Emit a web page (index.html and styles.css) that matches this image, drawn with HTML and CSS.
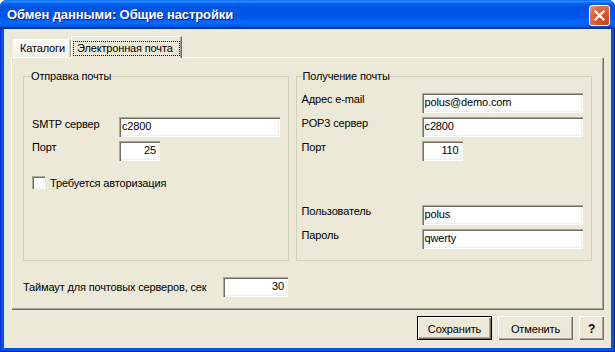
FILE: index.html
```html
<!DOCTYPE html>
<html lang="ru">
<head>
<meta charset="utf-8">
<title>Обмен данными: Общие настройки</title>
<link rel="stylesheet" href="styles.css">
</head>
<body>
<div class="window">
  <div class="titlebar">
    <span class="title">Обмен данными: Общие настройки</span>
    <button class="close" aria-label="Закрыть">
      <svg width="19" height="19" viewBox="0 0 19 19"><path d="M5.5 5.5 L13.5 13.5 M13.5 5.5 L5.5 13.5" stroke="#fff" stroke-width="2.2" stroke-linecap="square" fill="none"/></svg>
    </button>
  </div>
  <div class="client">
    <div class="tabs">
      <div class="tab">Каталоги</div>
      <div class="tab active"><span class="focus">Электронная почта</span></div>
    </div>
    <div class="panel">
      <div class="groups">
        <fieldset class="group send">
          <legend>Отправка почты</legend>
          <div class="row first-send"><span class="label">SMTP сервер</span><div class="field wide">c2800</div></div>
          <div class="row next"><span class="label">Порт</span><div class="field short num">25</div></div>
          <div class="check-row"><span class="checkbox"></span><span>Требуется авторизация</span></div>
        </fieldset>
        <fieldset class="group recv">
          <legend>Получение почты</legend>
          <div class="row first-recv"><span class="label">Адрес e-mail</span><div class="field wide">polus@demo.com</div></div>
          <div class="row next"><span class="label">POP3 сервер</span><div class="field wide">c2800</div></div>
          <div class="row next"><span class="label">Порт</span><div class="field short num">110</div></div>
          <div class="row far"><span class="label">Пользователь</span><div class="field wide">polus</div></div>
          <div class="row next"><span class="label">Пароль</span><div class="field wide">qwerty</div></div>
        </fieldset>
      </div>
      <div class="timeout">
        <span class="label">Таймаут для почтовых серверов, сек</span>
        <div class="field num">30</div>
      </div>
    </div>
    <div class="buttons">
      <button class="btn default">Сохранить</button>
      <button class="btn">Отменить</button>
      <button class="btn help">?</button>
    </div>
  </div>
</div>
</body>
</html>
```
FILE: styles.css
```css
* { box-sizing: border-box; }
html, body { margin: 0; padding: 0; background: #fff; }
body {
  font-family: "Liberation Sans", Arial, sans-serif;
  font-size: 11px;
  letter-spacing: -0.15px;
  color: #000;
}
.window {
  width: 615px;
  height: 352px;
  display: flex;
  flex-direction: column;
  background: #0054E3;
  border-radius: 7px 7px 0 0;
  overflow: hidden;
  box-shadow: inset 1px 0 #0831D9, inset -1px 0 #001EA0, inset 0 -1px #001390;
}
.titlebar {
  height: 29px;
  flex: none;
  display: flex;
  align-items: center;
  justify-content: space-between;
  padding: 0 5px 0 7px;
  background: linear-gradient(to bottom, #0058EE 0%, #3593FF 4%, #288EFF 6%, #127DFF 8%, #036FFC 10%, #0262EE 14%, #0057E5 20%, #0054E3 24%, #0055EB 56%, #005BF5 66%, #026AFE 76%, #0062EF 86%, #0052D6 92%, #0040AB 94%, #003092 100%);
}
.title {
  color: #fff;
  font-weight: bold;
  font-size: 13px;
  letter-spacing: -0.1px;
  text-shadow: 1px 1px #0F1C8A;
}
.close {
  width: 21px;
  height: 21px;
  margin-top: 1px;
  padding: 0;
  border: 1px solid #fff;
  border-radius: 3px;
  background: radial-gradient(circle at 85% 85%, #C8421E 0%, #DA5A36 45%, #E0704E 75%, #F0A48A 100%);
  display: flex;
  align-items: center;
  justify-content: center;
}
.close svg { display: block; }
.client {
  flex: 1;
  margin: 0 4px 4px;
  background: #ECE9D8;
  display: flex;
  flex-direction: column;
  padding: 7px 7px 0;
}
.tabs {
  display: flex;
  align-items: flex-end;
  height: 21px;
  margin-left: 2px;
  flex: none;
}
.tab {
  height: 18px;
  width: 58px;
  padding-left: 6px;
  line-height: 16px;
  background: linear-gradient(to bottom, #FCFCFB, #F1EFE6);
  border: 1px solid #fff;
  border-right-color: #ACA899;
  border-bottom: none;
  box-shadow: inset -1px 0 #D8D5C6;
}
.tab.active {
  height: 22px;
  width: 111px;
  margin-bottom: -1px;
  padding: 3px 0 0 1px;
  position: relative;
  z-index: 1;
  background: #ECE9D8;
  border-right-color: #716F64;
  box-shadow: inset -1px 0 #ACA899;
}
.focus {
  display: inline-block;
  height: 15px;
  width: 107px;
  padding-left: 3px;
  line-height: 13px;
  border: 1px dotted #000;
}
.panel {
  flex: none;
  height: 253px;
  padding: 13px 12px 0;
  box-shadow: inset 1px 1px #fff, inset -1px -1px #716F64, inset -2px -2px #ACA899;
}
.groups {
  display: flex;
  gap: 7px;
  height: 191px;
}
.group {
  margin: 0;
  padding: 0;
  min-width: 0;
  height: 191px;
  border: 1px solid #D0D0BF;
}
.group legend {
  padding: 0;
  line-height: 12px;
}
.send { width: 266px; padding-left: 8px; }
.send legend { margin-left: -1px; }
.recv { width: 297px; padding-left: 5px; }
.recv legend { margin-left: 1px; }
.row {
  display: flex;
  align-items: flex-start;
  height: 20px;
}
.send .label { width: 87px; }
.recv .label { width: 120px; }
.label { line-height: 13px; white-space: nowrap; }
.first-send { margin-top: 35px; }
.first-send .label { padding-top: 1px; }
.first-recv { margin-top: 11px; }
.next { margin-top: 4px; }
.far { margin-top: 44px; }
.field {
  height: 20px;
  padding: 0 3px;
  line-height: 18px;
  background: #fff;
  white-space: nowrap;
  box-shadow: inset 1px 1px #ACA899, inset 2px 2px #716F64, inset -1px -1px #fff, inset -2px -2px #F1EFE2;
}
.wide { width: 161px; }
.short { width: 41px; }
.num { text-align: right; padding-right: 4px; }
.check-row {
  display: flex;
  align-items: center;
  gap: 5px;
  margin-top: 15px;
  height: 13px;
}
.checkbox {
  width: 13px;
  height: 13px;
  background: #fff;
  box-shadow: inset 1px 1px #ACA899, inset 2px 2px #716F64, inset -1px -1px #fff, inset -2px -2px #F1EFE2;
}
.timeout {
  display: flex;
  align-items: center;
  margin-top: 16px;
  height: 20px;
}
.timeout .label { width: 200px; }
.timeout .field { width: 65px; }
.buttons {
  flex: none;
  display: flex;
  justify-content: flex-end;
  gap: 6px;
  margin-top: 6px;
  height: 24px;
}
.btn {
  width: 75px;
  height: 24px;
  padding: 1px 0 0;
  font-family: "Liberation Sans", Arial, sans-serif;
  font-size: 11px;
  letter-spacing: -0.15px;
  color: #000;
  background: #ECE9D8;
  border: none;
  box-shadow: inset 1px 1px #fff, inset -1px -1px #716F64, inset -2px -2px #ACA899;
}
.btn.default {
  border: 1px solid #000;
}
.btn.help {
  width: 25px;
  font-weight: bold;
  font-size: 12px;
}
```
